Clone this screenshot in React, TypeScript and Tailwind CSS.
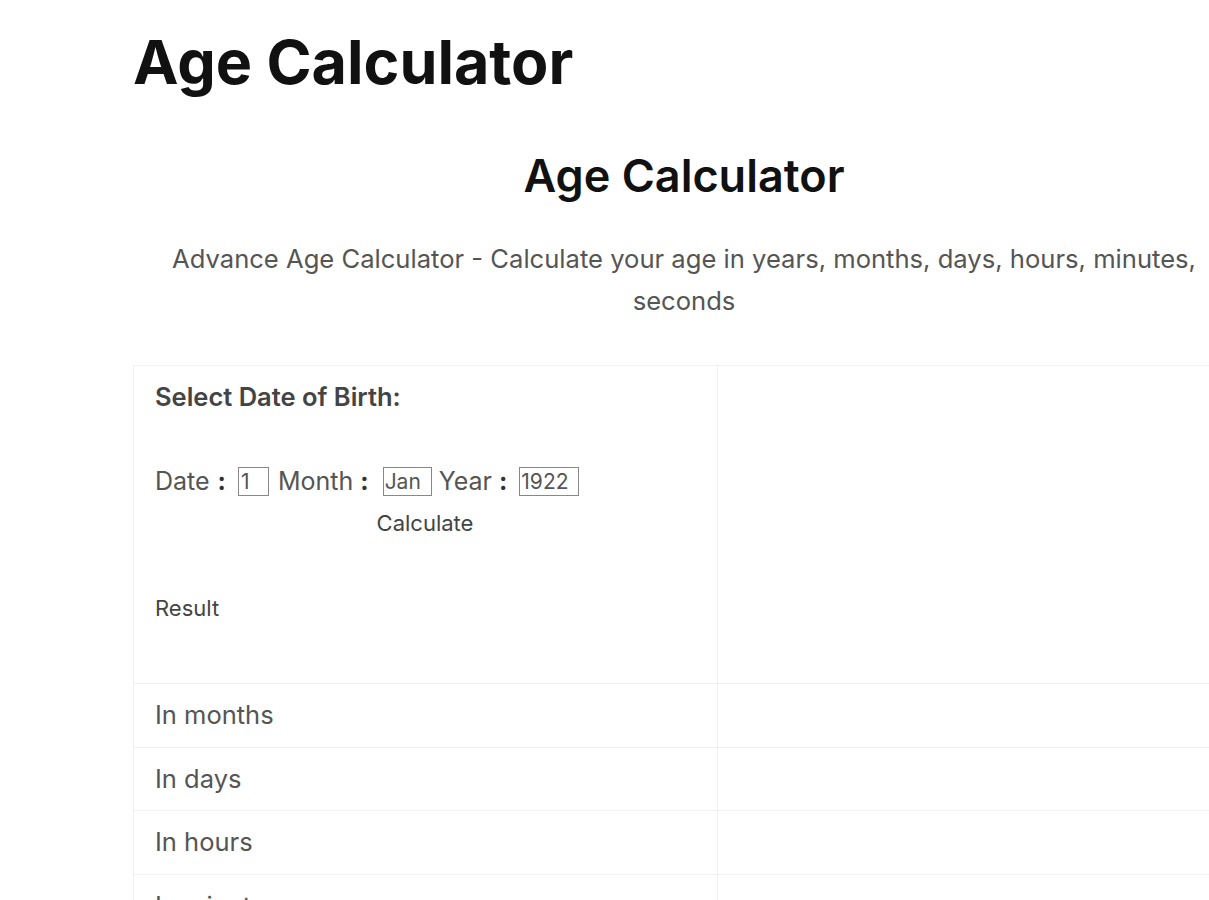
import React from "react";

export default function App() {
  const rows = ["In months", "In days", "In hours", "In minutes", "In seconds"];
  return (
    <div className="w-[1209px] h-[900px] overflow-hidden bg-white" style={{ fontFamily: "Inter, 'Liberation Sans', sans-serif" }}>
      <div className="pl-[133px] w-[1235px]">
        <h1 className="pt-[25px] text-[61px] leading-[74px] font-bold text-[#111]">Age Calculator</h1>
        <h2 className="mt-[50px] text-center text-[45px] leading-[54px] font-semibold text-[#111]">Age Calculator</h2>
        <p className="mt-[35px] text-center text-[25.6px] leading-[42px] text-[#555]">
          Advance Age Calculator - Calculate your age in years, months, days, hours, minutes, seconds
        </p>
        <div className="mt-[43px] border-t border-l border-[#f0f0f0]">
          <div className="flex border-b border-[#f0f0f0] h-[318px]">
            <div className="w-[584px] shrink-0 border-r border-[#f0f0f0] pl-[21px] pt-[16px]">
              <div className="text-[25.5px] leading-[30px] font-semibold text-[#444]">Select Date of Birth:</div>
              <div className="mt-[54px] flex items-center h-[30px] text-[25px] leading-[30px] text-[#555]">
                <span>Date</span>
                <span className="ml-[8px] font-bold text-[#333]">:</span>
                <span className="ml-[12px] inline-block w-[31px] h-[29px] border border-[#888] text-[21px] leading-[27px] pl-[2px]">1</span>
                <span className="ml-[9px]">Month</span>
                <span className="ml-[7px] font-bold text-[#333]">:</span>
                <span className="ml-[14px] inline-block w-[49px] h-[29px] border border-[#888] text-[21px] leading-[27px] pl-[1px]">Jan</span>
                <span className="ml-[7px]">Year</span>
                <span className="ml-[7px] font-bold text-[#333]">:</span>
                <span className="ml-[12px] inline-block w-[60px] h-[29px] border border-[#888] text-[21px] leading-[27px] pl-[1px]">1922</span>
              </div>
              <div className="mt-[13px] w-[540px] text-center text-[22px] leading-[28px] text-[#444]">Calculate</div>
              <div className="mt-[57px] text-[22px] leading-[28px] text-[#444]">Result</div>
            </div>
            <div className="flex-1"></div>
          </div>
          {rows.map((r) => (
            <div key={r} className="flex border-b border-[#f0f0f0] h-[63.6px]">
              <div className="w-[584px] shrink-0 border-r border-[#f0f0f0] pl-[21px] flex items-center text-[25.5px] text-[#555]">{r}</div>
              <div className="flex-1"></div>
            </div>
          ))}
        </div>
      </div>
    </div>
  );
}
